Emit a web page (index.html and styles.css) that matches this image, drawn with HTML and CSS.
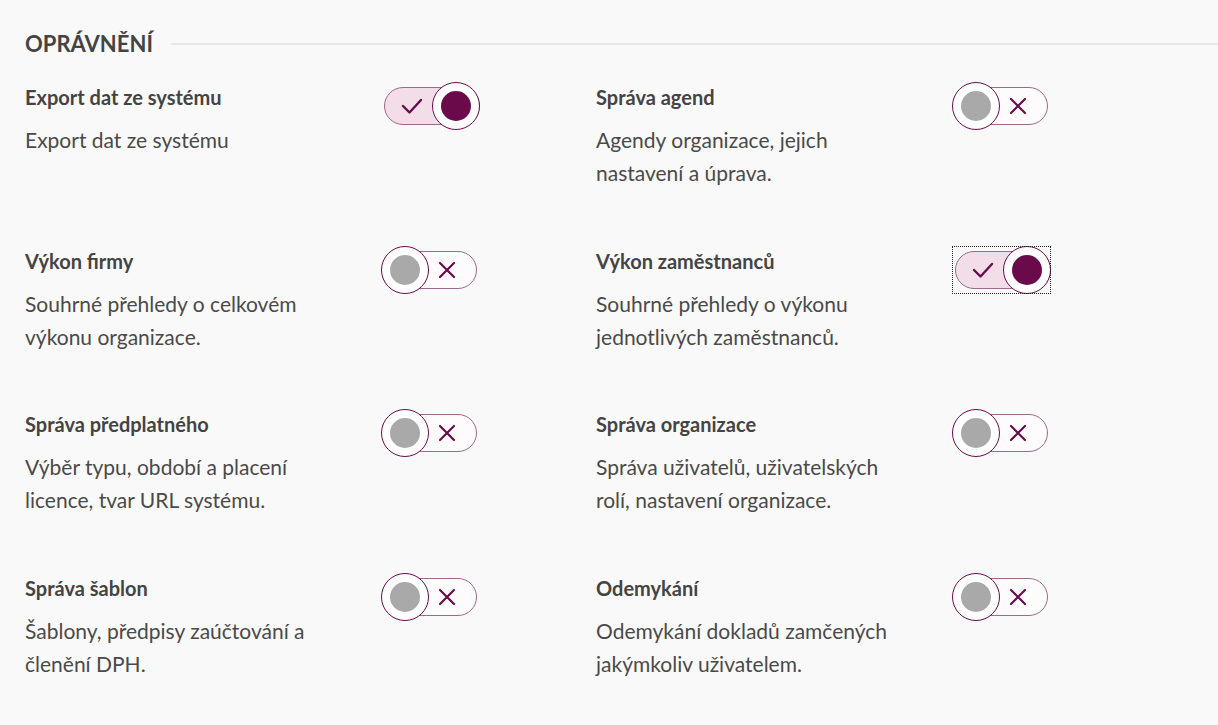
FILE: index.html
```html
<!DOCTYPE html>
<html lang="cs">
<head>
    <meta charset="utf-8">
    <title>Oprávnění</title>
    <link rel="stylesheet" href="styles.css">
</head>
<body>
    <section class="permissions">
        <div class="section-head">
            <h2>Oprávnění</h2>
            <span class="rule"></span>
        </div>

        <div class="perm-grid">
            <div class="perm">
                <div class="perm-text">
                    <h3>Export dat ze systému</h3>
                    <p>Export dat ze systému</p>
                </div>
                <div class="switch on">
                    <span class="track"><svg viewBox="0 0 22 18" width="22" height="18"><path d="M2 9l6.5 6.5L20 3" fill="none" stroke="#6b0a4a" stroke-width="2.4" stroke-linecap="round" stroke-linejoin="round"/></svg></span>
                    <span class="knob"></span>
                </div>
            </div>

            <div class="perm">
                <div class="perm-text">
                    <h3>Správa agend</h3>
                    <p>Agendy organizace, jejich nastavení a úprava.</p>
                </div>
                <div class="switch">
                    <span class="track"><svg viewBox="0 0 18 18" width="18" height="18"><path d="M2 2l14 14M16 2L2 16" fill="none" stroke="#6b0a4a" stroke-width="2.2" stroke-linecap="round"/></svg></span>
                    <span class="knob"></span>
                </div>
            </div>

            <div class="perm">
                <div class="perm-text">
                    <h3>Výkon firmy</h3>
                    <p>Souhrné přehledy o celkovém výkonu organizace.</p>
                </div>
                <div class="switch">
                    <span class="track"><svg viewBox="0 0 18 18" width="18" height="18"><path d="M2 2l14 14M16 2L2 16" fill="none" stroke="#6b0a4a" stroke-width="2.2" stroke-linecap="round"/></svg></span>
                    <span class="knob"></span>
                </div>
            </div>

            <div class="perm">
                <div class="perm-text">
                    <h3>Výkon zaměstnanců</h3>
                    <p>Souhrné přehledy o výkonu jednotlivých zaměstnanců.</p>
                </div>
                <div class="switch on focused">
                    <span class="track"><svg viewBox="0 0 22 18" width="22" height="18"><path d="M2 9l6.5 6.5L20 3" fill="none" stroke="#6b0a4a" stroke-width="2.4" stroke-linecap="round" stroke-linejoin="round"/></svg></span>
                    <span class="knob"></span>
                </div>
            </div>

            <div class="perm">
                <div class="perm-text">
                    <h3>Správa předplatného</h3>
                    <p>Výběr typu, období a placení licence, tvar URL systému.</p>
                </div>
                <div class="switch">
                    <span class="track"><svg viewBox="0 0 18 18" width="18" height="18"><path d="M2 2l14 14M16 2L2 16" fill="none" stroke="#6b0a4a" stroke-width="2.2" stroke-linecap="round"/></svg></span>
                    <span class="knob"></span>
                </div>
            </div>

            <div class="perm">
                <div class="perm-text">
                    <h3>Správa organizace</h3>
                    <p>Správa uživatelů, uživatelských rolí, nastavení organizace.</p>
                </div>
                <div class="switch">
                    <span class="track"><svg viewBox="0 0 18 18" width="18" height="18"><path d="M2 2l14 14M16 2L2 16" fill="none" stroke="#6b0a4a" stroke-width="2.2" stroke-linecap="round"/></svg></span>
                    <span class="knob"></span>
                </div>
            </div>

            <div class="perm">
                <div class="perm-text">
                    <h3>Správa šablon</h3>
                    <p>Šablony, předpisy zaúčtování a členění DPH.</p>
                </div>
                <div class="switch">
                    <span class="track"><svg viewBox="0 0 18 18" width="18" height="18"><path d="M2 2l14 14M16 2L2 16" fill="none" stroke="#6b0a4a" stroke-width="2.2" stroke-linecap="round"/></svg></span>
                    <span class="knob"></span>
                </div>
            </div>

            <div class="perm">
                <div class="perm-text">
                    <h3>Odemykání</h3>
                    <p>Odemykání dokladů zamčených jakýmkoliv uživatelem.</p>
                </div>
                <div class="switch">
                    <span class="track"><svg viewBox="0 0 18 18" width="18" height="18"><path d="M2 2l14 14M16 2L2 16" fill="none" stroke="#6b0a4a" stroke-width="2.2" stroke-linecap="round"/></svg></span>
                    <span class="knob"></span>
                </div>
            </div>
        </div>
    </section>
</body>
</html>
```

FILE: styles.css
```css
/* Nastavení oprávnění - světlé pozadí, fialové přepínače */
body {
    margin: 0;
    background-color: #f9f9f9;
    color: #454545;
    font-family: Lato, 'Open Sans', sans-serif;
}

.permissions {
    padding: 31px 0 40px 25px;
}

.section-head {
    display: flex;
    align-items: center;
    gap: 18px;
}

.section-head h2 {
    margin: 0;
    font-size: 22px;
    line-height: 26px;
    font-weight: 700;
    text-transform: uppercase;
    color: #444;
}

.section-head .rule {
    flex: 1;
    height: 2px;
    background-color: #e8e8e8;
}

.perm-grid {
    display: grid;
    grid-template-columns: 571px 1fr;
    row-gap: 59.5px;
    margin-top: 28px;
}

.perm {
    display: grid;
    grid-template-columns: 356px 100px;
    align-items: start;
}

.perm-text h3 {
    margin: 0;
    font-size: 20px;
    line-height: 24px;
    font-weight: 700;
    color: #444;
}

.perm-text p {
    margin: 14px 0 0;
    max-width: 305px;
    font-size: 21px;
    line-height: 33px;
    color: #4a4a4a;
}

/* prepinac */
.switch {
    display: grid;
    width: 96px;
    height: 48px;
    margin-top: -3px;
}

.track {
    grid-area: 1 / 1;
    align-self: center;
    height: 38px;
    margin-left: 4px;
    box-sizing: border-box;
    border: 1px solid #9a6b8a;
    border-radius: 19px;
    background-color: #fdfbfc;
    display: flex;
    align-items: center;
    justify-content: flex-end;
    padding-right: 20px;
}

.track svg {
    flex-shrink: 0;
}

.knob {
    grid-area: 1 / 1;
    justify-self: start;
    width: 48px;
    height: 48px;
    box-sizing: border-box;
    border: 1px solid #6b0a4a;
    border-radius: 50%;
    background-color: #fff;
    display: flex;
    align-items: center;
    justify-content: center;
}

.knob::after {
    content: "";
    width: 30px;
    height: 30px;
    border-radius: 50%;
    background-color: #a9a9a9;
}

.switch.on {
    width: 99px;
}

.switch.on .track {
    background-color: #f3dde8;
    justify-content: flex-start;
    padding-right: 0;
    padding-left: 16px;
    margin-left: 3px;
}

.switch.on .knob {
    justify-self: end;
}

.switch.on .knob::after {
    background-color: #6b0a4a;
}

.switch.focused {
    outline: 1px dotted #222;
    outline-offset: -1px;
}
```
